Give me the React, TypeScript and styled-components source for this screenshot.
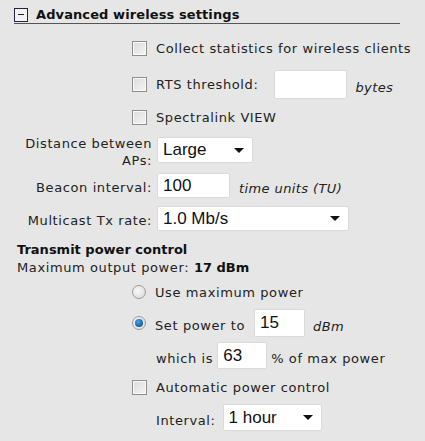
import { createGlobalStyle, styled } from "styled-components";

const Global = createGlobalStyle`
  body {
    margin: 0;
    background: #e6e6e6;
  }
`;

const Page = styled.div`
  width: 425px;
  height: 441px;
  box-sizing: border-box;
  padding: 6px 0 0 14px;
  font-family: "DejaVu Sans", Verdana, sans-serif;
  font-size: 13px;
  letter-spacing: 0.6px;
  color: #222;
  white-space: nowrap;
`;

const Header = styled.div`
  display: flex;
  align-items: center;
  gap: 8px;
  width: 386px;
  height: 17px;
  border-bottom: 1px solid #555;
  font-weight: 700;
  letter-spacing: 0.1px;
  color: #111;
`;

const Toggle = styled.span`
  position: relative;
  width: 12px;
  height: 12px;
  border: 1px solid #23234a;
  background: #f2f2f2;
  &::after {
    content: "";
    position: absolute;
    left: 3px;
    right: 3px;
    top: 5px;
    height: 1px;
    background: #222;
  }
`;

const CheckRow = styled.div<{ $h: number; $mt?: number }>`
  display: flex;
  align-items: center;
  gap: 9px;
  height: ${({ $h }) => $h}px;
  margin-top: ${({ $mt }) => $mt ?? 0}px;
  padding-left: 118px;
`;

const Box = styled.span`
  flex: none;
  width: 13px;
  height: 13px;
  border: 1px solid #8e8e8e;
  box-shadow: inset 0 0 0 1px #fafafa;
  background: linear-gradient(135deg, #dcdcdc, #f4f4f4);
`;

const Radio = styled.span<{ $on?: boolean }>`
  flex: none;
  position: relative;
  width: 12px;
  height: 12px;
  border-radius: 50%;
  border: 1px solid #9a9a9a;
  background: radial-gradient(circle at 40% 40%, #fafafa, #d6d6d6);
  &::after {
    content: "";
    display: ${({ $on }) => ($on ? "block" : "none")};
    position: absolute;
    left: 2px;
    top: 2px;
    width: 8px;
    height: 8px;
    border-radius: 50%;
    background: radial-gradient(circle at 40% 35%, #4aa3e8, #0b5fa8 70%, #0a3f70);
  }
`;

const FieldRow = styled.div<{ $h: number }>`
  display: grid;
  grid-template-columns: 138px auto;
  column-gap: 5px;
  align-items: center;
  height: ${({ $h }) => $h}px;
`;

const Label = styled.div`
  text-align: right;
  line-height: 17px;
  padding-top: 3px;
`;

const Inline = styled.div<{ $ml?: number }>`
  display: flex;
  align-items: center;
  gap: 8px;
  margin-left: ${({ $ml }) => $ml ?? 0}px;
`;

const Field = styled.div<{ $w: number; $h?: number; $ml?: number }>`
  flex: none;
  box-sizing: border-box;
  width: ${({ $w }) => $w}px;
  height: ${({ $h }) => $h ?? 26}px;
  margin-left: ${({ $ml }) => $ml ?? 0}px;
  background: #fff;
  border: 1px solid #dadada;
  border-radius: 2px;
  display: flex;
  align-items: center;
  justify-content: space-between;
  padding: 0 8px 0 5px;
  font-family: "Liberation Sans", Arial, sans-serif;
  font-size: 17px;
  letter-spacing: 0;
  color: #111;
`;

const Caret = styled.span`
  width: 0;
  height: 0;
  border-left: 5px solid transparent;
  border-right: 5px solid transparent;
  border-top: 5px solid #111;
`;

const Unit = styled.span<{ $ml?: number }>`
  font-style: italic;
  letter-spacing: 0.4px;
  padding-top: 6px;
  margin-left: ${({ $ml }) => $ml ?? 0}px;
`;

const Section = styled.div`
  font-weight: 700;
  letter-spacing: 0;
  height: 18px;
  line-height: 18px;
  padding-left: 3px;
  margin-top: 6px;
  color: #111;
`;

const Info = styled.div`
  height: 18px;
  line-height: 18px;
  padding-left: 3px;
  b {
    letter-spacing: 0;
    color: #111;
  }
`;

const SubRow = styled.div<{ $h: number }>`
  display: flex;
  align-items: center;
  gap: 4px;
  height: ${({ $h }) => $h}px;
  padding-left: 142px;
`;

const Text = styled.span<{ $ml?: number }>`
  padding-top: 5px;
  margin-left: ${({ $ml }) => $ml ?? 0}px;
`;

export default function App() {
  return (
    <>
      <Global />
      <Page>
        <Header>
          <Toggle />
          Advanced wireless settings
        </Header>
        <CheckRow $h={34} $mt={7}>
          <Box />
          Collect statistics for wireless clients
        </CheckRow>
        <CheckRow $h={38}>
          <Box />
          <span>RTS threshold:</span>
          <Inline $ml={7}>
            <Field $w={73} $h={29} />
            <Unit>bytes</Unit>
          </Inline>
        </CheckRow>
        <CheckRow $h={28}>
          <Box />
          Spectralink VIEW
        </CheckRow>
        <FieldRow $h={38}>
          <Label>
            Distance between
            <br />
            APs:
          </Label>
          <Field $w={96}>
            Large
            <Caret />
          </Field>
        </FieldRow>
        <FieldRow $h={33}>
          <Label>Beacon interval:</Label>
          <Inline>
            <Field $w={73} $h={25}>100</Field>
            <Unit $ml={1}>time units (TU)</Unit>
          </Inline>
        </FieldRow>
        <FieldRow $h={33}>
          <Label>Multicast Tx rate:</Label>
          <Field $w={192} $h={25}>
            1.0 Mb/s
            <Caret />
          </Field>
        </FieldRow>
        <Section>Transmit power control</Section>
        <Info>
          Maximum output power: <b>17 dBm</b>
        </Info>
        <CheckRow $h={26} $mt={2}>
          <Radio />
          Use maximum power
        </CheckRow>
        <CheckRow $h={36}>
          <Radio $on />
          <Text>Set power to</Text>
          <Inline>
            <Field $w={51} $h={28}>15</Field>
            <Unit>dBm</Unit>
          </Inline>
        </CheckRow>
        <SubRow $h={29}>
          <Text>which is</Text>
          <Field $w={50} $h={27}>63</Field>
          <Text $ml={0}>% of max power</Text>
        </SubRow>
        <CheckRow $h={34}>
          <Box />
          Automatic power control
        </CheckRow>
        <SubRow $h={27}>
          <Text>Interval:</Text>
          <Field $w={99} $h={27} $ml={3}>
            1 hour
            <Caret />
          </Field>
        </SubRow>
      </Page>
    </>
  );
}
